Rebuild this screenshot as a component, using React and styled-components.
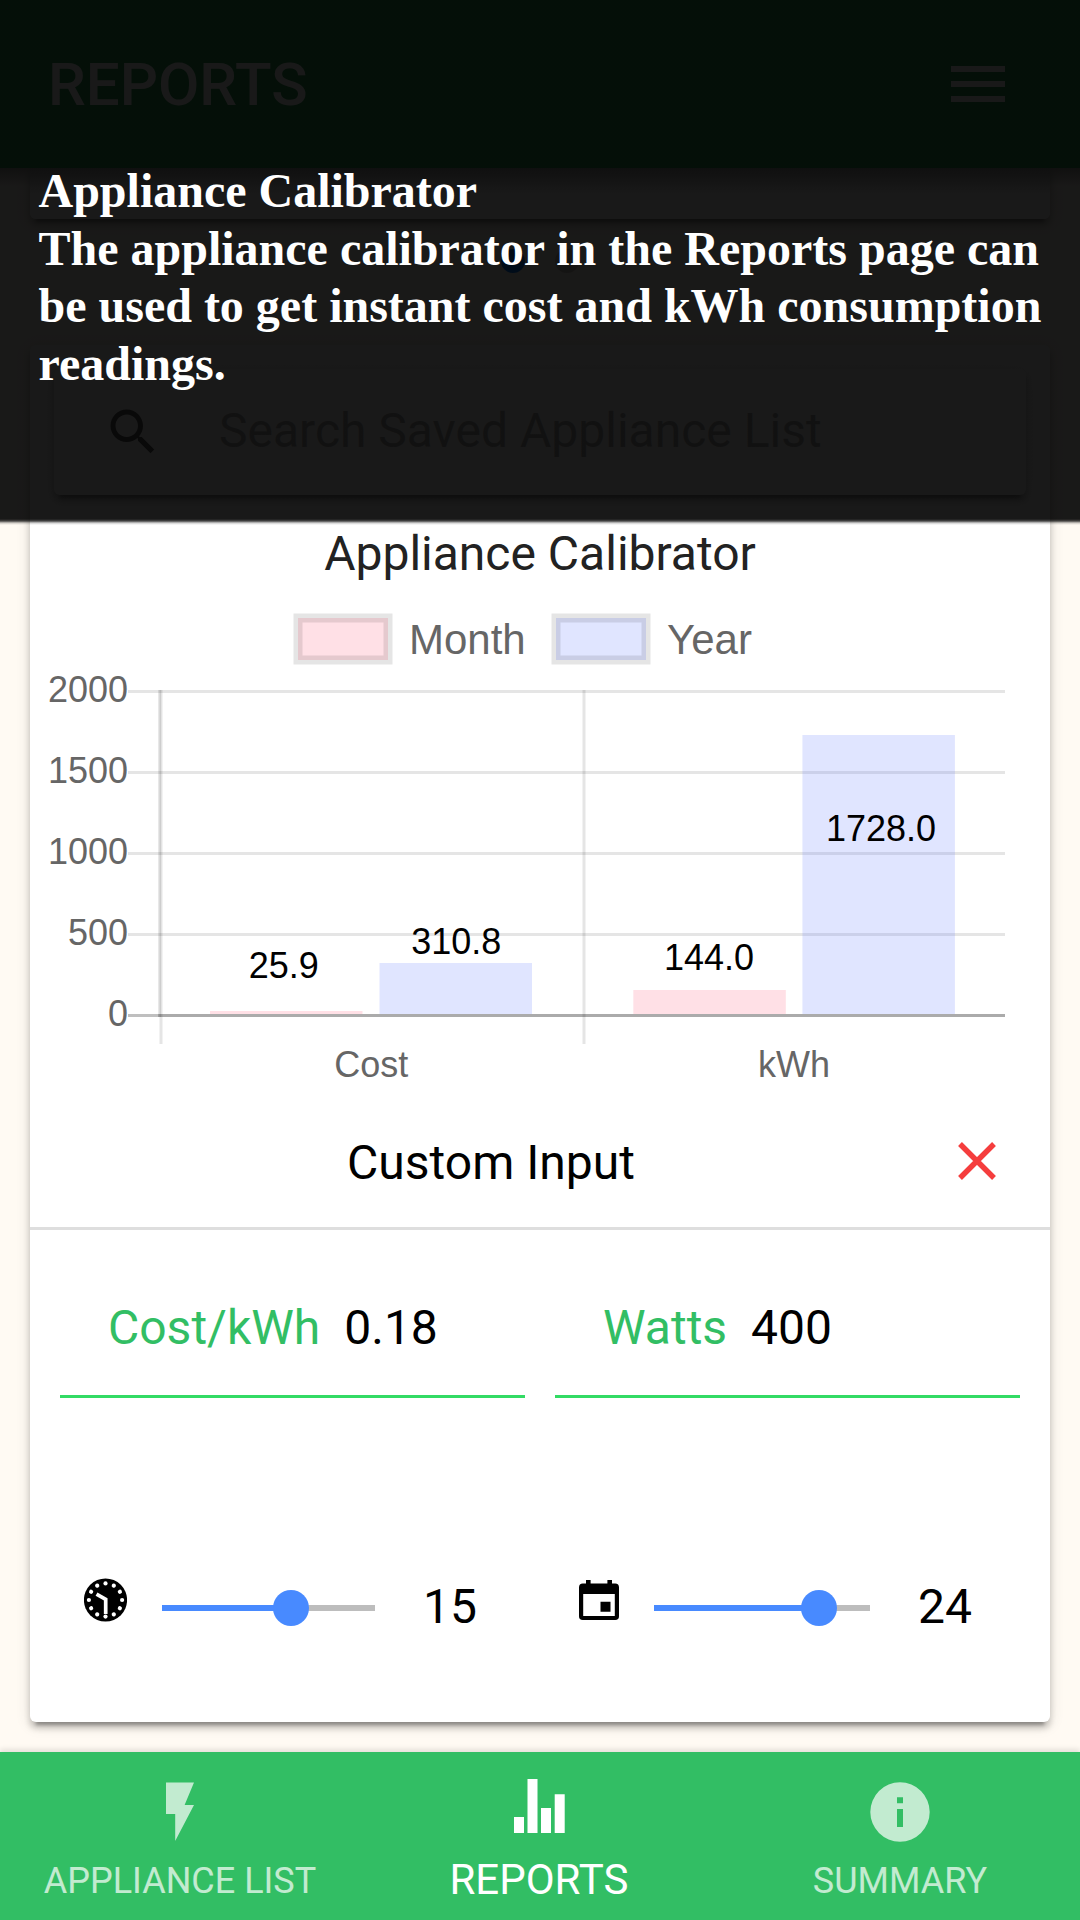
import React from "react";
import styled, { createGlobalStyle } from "styled-components";

const GlobalStyle = createGlobalStyle`
  *, *::before, *::after { box-sizing: border-box; }
  body { margin: 0; background: #fffaf3; }
`;

const Page = styled.div`
  position: relative;
  display: flex;
  flex-direction: column;
  width: 1080px;
  height: 1920px;
  overflow: hidden;
  background: #fffaf3;
  font-family: Roboto, sans-serif;
  color: #000;
`;

const Header = styled.header`
  display: flex;
  flex: none;
  align-items: center;
  justify-content: space-between;
  height: 168px;
  padding: 0 75px 0 48px;
  background: #2a9650;
  z-index: 1;
`;

const HeaderTitle = styled.h1`
  margin: 0;
  padding-top: 2px;
  font-size: 60px;
  font-weight: 500;
  line-height: 72px;
  color: #fff;
`;

const MenuButton = styled.div`
  display: flex;
  flex-direction: column;
  gap: 9px;
  width: 54px;
`;

const MenuBar = styled.span`
  height: 6px;
  background: #fff;
`;

const Content = styled.main`
  display: flex;
  flex: 1;
  flex-direction: column;
  min-height: 0;
  padding: 0 30px 30px;
  background: linear-gradient(to bottom, rgba(0, 0, 0, 0.35), rgba(0, 0, 0, 0) 18px);
`;

const cardShadow = `
  0 6px 6px 0 rgba(0, 0, 0, 0.2),
  0 9px 3px -6px rgba(0, 0, 0, 0.25),
  0 3px 15px 0 rgba(0, 0, 0, 0.12)
`;

const PreviousCard = styled.section`
  flex: none;
  height: 51px;
  border-radius: 0 0 6px 6px;
  background: linear-gradient(to bottom, #9c9c9c, #ffffff 26px);
  box-shadow: ${cardShadow};
`;

const Pager = styled.div`
  display: flex;
  flex: none;
  align-items: center;
  justify-content: center;
  gap: 30px;
  height: 84px;
`;

const PagerDot = styled.span`
  width: 24px;
  height: 24px;
  border-radius: 50%;
  background: ${(p) => (p.$active ? "#007aff" : "rgba(0, 0, 0, 0.2)")};
`;

const Card = styled.section`
  display: flex;
  flex: none;
  flex-direction: column;
  height: 1377px;
  margin-top: 42px;
  border-radius: 6px;
  background: #fff;
  box-shadow: ${cardShadow};
`;

const SearchBox = styled.div`
  display: flex;
  flex: none;
  align-items: center;
  height: 126px;
  margin: 24px 24px 0;
  padding-left: 49px;
  border-radius: 6px;
  background: #fff;
  box-shadow: ${cardShadow};
`;

const SearchText = styled.span`
  margin-left: 56px;
  padding-bottom: 3px;
  font-size: 48px;
  line-height: 56px;
  color: #aeaeae;
`;

const CardTitle = styled.h2`
  flex: none;
  margin: 14px 0 0;
  font-size: 48px;
  font-weight: 400;
  line-height: 90px;
  text-align: center;
  color: #222;
`;

const ChartSvg = styled.svg`
  display: block;
  flex: none;
  width: 1020px;
  height: 501px;
  font-family: "Liberation Sans", Arial, sans-serif;
`;

const InputHeader = styled.div`
  display: flex;
  flex: none;
  align-items: center;
  height: 130px;
  padding-bottom: 2px;
  border-bottom: 3px solid #dedede;
`;

const InputTitle = styled.h3`
  flex: 1;
  margin: 0;
  font-size: 48px;
  font-weight: 400;
  line-height: 56px;
  text-align: center;
`;

const CloseButton = styled.div`
  display: flex;
  width: 98px;
  padding: 0 0 3px 6px;
`;

const FieldRow = styled.div`
  display: grid;
  flex: none;
  grid-template-columns: 465px 465px;
  gap: 30px;
  padding: 0 30px;
`;

const Field = styled.div`
  display: flex;
  align-items: center;
  gap: 24px;
  height: 168px;
  padding: 31px 0 0 48px;
  border-bottom: 3px solid #32db64;
  font-size: 48px;
  line-height: 56px;
`;

const FieldLabel = styled.span`
  color: #32be64;
`;

const SliderRow = styled(FieldRow)`
  padding-top: 105px;
`;

const SliderGroup = styled.div`
  display: flex;
  align-items: center;
  height: 210px;
  padding-left: 24px;
`;

const SliderIcon = styled.div`
  display: flex;
  width: 43px;
  padding-bottom: 16px;
`;

const Track = styled.div`
  display: flex;
  align-items: center;
  width: ${(p) => p.$width}px;
  height: 6px;
  margin-left: ${(p) => p.$gap}px;
  background: #bdbdbd;
`;

const TrackFill = styled.div`
  height: 6px;
  background: #488aff;
`;

const Knob = styled.div`
  flex: none;
  width: 36px;
  height: 36px;
  margin-left: -18px;
  border-radius: 50%;
  background: #488aff;
`;

const SliderValue = styled.span`
  margin-left: 48px;
  padding-bottom: 3px;
  font-size: 48px;
  line-height: 56px;
`;

const TabBar = styled.nav`
  display: grid;
  flex: none;
  grid-template-columns: repeat(3, 360px);
  height: 168px;
  background: #32be64;
  box-shadow: 0 -3px 5px rgba(0, 0, 0, 0.1);
`;

const Tab = styled.div`
  display: flex;
  flex-direction: column;
  align-items: center;
  justify-content: space-between;
  padding: ${(p) => (p.$active ? "27px 2px 15px 0" : "30px 0 18px")};
  color: #fff;
  opacity: ${(p) => (p.$active ? 1 : 0.7)};
  font-size: ${(p) => (p.$active ? 42 : 36)}px;
  line-height: ${(p) => (p.$active ? 50 : 42)}px;
`;

const HelpOverlay = styled.div`
  position: absolute;
  top: 0;
  left: 0;
  z-index: 2;
  width: 1080px;
  height: 525px;
  padding: 162px 30px 0 38.5px;
  background: linear-gradient(
    to bottom,
    rgba(0, 0, 0, 0.9) 519px,
    rgba(0, 0, 0, 0.72) 521px,
    rgba(0, 0, 0, 0.18) 523px,
    rgba(0, 0, 0, 0) 525px
  );
  font-family: "Liberation Serif", "Times New Roman", serif;
  font-size: 48px;
  font-weight: 700;
  line-height: 57.6px;
  color: #fff;
`;

const HelpText = styled.p`
  margin: 0;
`;

const SearchIcon = () => (
  <svg width="60" height="60" viewBox="0 0 24 24" fill="#5b5b5b">
    <path d="M15.5 14h-.79l-.28-.27C15.41 12.59 16 11.11 16 9.5 16 5.91 13.09 3 9.5 3S3 5.91 3 9.5 5.91 16 9.5 16c1.61 0 3.09-.59 4.23-1.57l.27.28v.79l5 4.99L20.49 19l-4.99-5zm-6 0C7.01 14 5 11.99 5 9.5S7.01 5 9.5 5 14 7.01 14 9.5 11.99 14 9.5 14z" />
  </svg>
);

const CloseIcon = () => (
  <svg width="38" height="38" viewBox="0 0 38 38" stroke="#f53d3d" strokeWidth="5.400">
    <path d="M2 2L36 36M36 2L2 36" />
  </svg>
);

const ClockIcon = () => (
  <svg width="43" height="44" viewBox="-21.5 -22 43 44">
    <circle r="21.6" fill="#000" />
    {Array.from({ length: 12 }, (_, i) => (
      <circle key={i} cy="-16.6" r="2.1" fill="#fff" transform={`rotate(${i * 30})`} />
    ))}
    <path d="M-9 -5.8L0.2 -0.6V14" fill="none" stroke="#fff" strokeWidth="3.7" />
  </svg>
);

const CalendarIcon = () => (
  <svg width="40" height="40" viewBox="0 0 40 40" fillRule="evenodd">
    <path d="M7 0h4.6v3.6h16.8V0H33v3.6h3.2A3.8 3.8 0 0 1 40 7.4v28.8a3.8 3.8 0 0 1-3.8 3.8H3.8A3.8 3.8 0 0 1 0 36.200V7.400A3.8 3.8 0 0 1 3.800 3.600H7zM4.200 14v22h31.600V14zM21.500 21.700h10v10h-10z" />
  </svg>
);

const FlashIcon = () => (
  <svg width="28" height="59" viewBox="0 0 28 59" fill="currentColor">
    <path d="M0 .5H28L18.600 23H28L9.200 59V32H0z" />
  </svg>
);

const StatsIcon = () => (
  <svg width="51" height="54" viewBox="0 0 51 54" fill="currentColor">
    <path d="M0 38h10v16H0zM13.500 0h10v54h-10zM27 29h10v25H27zM40.700 15.300h10V54h-10z" />
  </svg>
);

const InfoIcon = () => (
  <svg width="60" height="60" viewBox="0 0 60 60" fill="currentColor" fillRule="evenodd">
    <path d="M30 .3a29.700 29.700 0 1 0 0 59.400a29.700 29.700 0 1 0 0-59.400zM27 15.300h6v6h-6zM27 27h6v18h-6z" />
  </svg>
);

const PINK = "rgba(255, 99, 132, 0.2)";
const BLUE = "rgba(99, 125, 255, 0.2)";

const ticks = [
  { label: "2000", y: 691.5 },
  { label: "1500", y: 772.5 },
  { label: "1000", y: 853.5 },
  { label: "500", y: 934.5 },
];

const bars = [
  { x: 210, y: 1011, fill: PINK, label: "25.9", lx: 283.8, ly: 978 },
  { x: 379.5, y: 963, fill: BLUE, label: "310.8", lx: 456.3, ly: 954 },
  { x: 633.3, y: 990, fill: PINK, label: "144.0", lx: 709, ly: 969.5 },
  { x: 802.4, y: 735, fill: BLUE, label: "1728.0", lx: 881, ly: 840.5 },
];

const Chart = () => (
  <ChartSvg viewBox="30 599 1020 501">
    <g stroke="rgba(0,0,0,0.1)" strokeWidth="9">
      <rect x="298" y="618" width="90" height="42" fill={PINK} />
      <rect x="556" y="618" width="90" height="42" fill={BLUE} />
    </g>
    <g fill="#666" fontSize="42">
      <text x="409" y="654">Month</text>
      <text x="667" y="654">Year</text>
    </g>
    <g stroke="rgba(0,0,0,0.1)" strokeWidth="3">
      {ticks.map((t) => (
        <line key={t.label} x1="128" x2="1005" y1={t.y} y2={t.y} />
      ))}
      <line x1="161" x2="161" y1="690" y2="1044" />
      <line x1="584" x2="584" y1="690" y2="1044" />
      <line x1="159.600" x2="159.600" y1="690" y2="1017" />
      <line x1="158" x2="1005" y1="1015.500" y2="1015.500" />
      <line x1="128" x2="1005" y1="1015.500" y2="1015.500" stroke="rgba(0,0,0,0.25)" />
    </g>
    {bars.map((b) => (
      <rect key={b.label} x={b.x} y={b.y} width="152.500" height={1014 - b.y} fill={b.fill} />
    ))}
    <g fill="#666" fontSize="36" textAnchor="end">
      {ticks.map((t) => (
        <text key={t.label} x="128" y={t.y + 10.5}>{t.label}</text>
      ))}
      <text x="128" y="1026">0</text>
    </g>
    <g fontSize="36" textAnchor="middle">
      {bars.map((b) => (
        <text key={b.label} x={b.lx} y={b.ly}>{b.label}</text>
      ))}
      <text x="371.200" y="1077" fill="#666">Cost</text>
      <text x="794" y="1077" fill="#666">kWh</text>
    </g>
  </ChartSvg>
);

const Slider = ({ icon, gap, width, position, value }) => (
  <SliderGroup>
    <SliderIcon>{icon}</SliderIcon>
    <Track $gap={gap} $width={width}>
      <TrackFill style={{ width: position }} />
      <Knob />
    </Track>
    <SliderValue>{value}</SliderValue>
  </SliderGroup>
);

export default function App() {
  return (
    <>
      <GlobalStyle />
      <Page>
        <Header>
          <HeaderTitle>REPORTS</HeaderTitle>
          <MenuButton>
            <MenuBar />
            <MenuBar />
            <MenuBar />
          </MenuButton>
        </Header>
        <Content>
          <PreviousCard />
          <Pager>
            <PagerDot $active />
            <PagerDot />
          </Pager>
          <Card>
            <SearchBox>
              <SearchIcon />
              <SearchText>Search Saved Appliance List</SearchText>
            </SearchBox>
            <CardTitle>Appliance Calibrator</CardTitle>
            <Chart />
            <InputHeader>
              <InputTitle>Custom Input</InputTitle>
              <CloseButton>
                <CloseIcon />
              </CloseButton>
            </InputHeader>
            <FieldRow>
              <Field>
                <FieldLabel>Cost/kWh</FieldLabel>
                <span>0.18</span>
              </Field>
              <Field>
                <FieldLabel>Watts</FieldLabel>
                <span>400</span>
              </Field>
            </FieldRow>
            <SliderRow>
              <Slider icon={<ClockIcon />} gap={35} width={213} position={129} value="15" />
              <Slider icon={<CalendarIcon />} gap={32} width={216} position={165} value="24" />
            </SliderRow>
          </Card>
        </Content>
        <TabBar>
          <Tab>
            <FlashIcon />
            <span>APPLIANCE LIST</span>
          </Tab>
          <Tab $active>
            <StatsIcon />
            <span>REPORTS</span>
          </Tab>
          <Tab>
            <InfoIcon />
            <span>SUMMARY</span>
          </Tab>
        </TabBar>
        <HelpOverlay>
          <HelpText>Appliance Calibrator</HelpText>
          <HelpText>
            The appliance calibrator in the Reports page can be used to get instant cost and kWh
            consumption readings.
          </HelpText>
        </HelpOverlay>
      </Page>
    </>
  );
}
